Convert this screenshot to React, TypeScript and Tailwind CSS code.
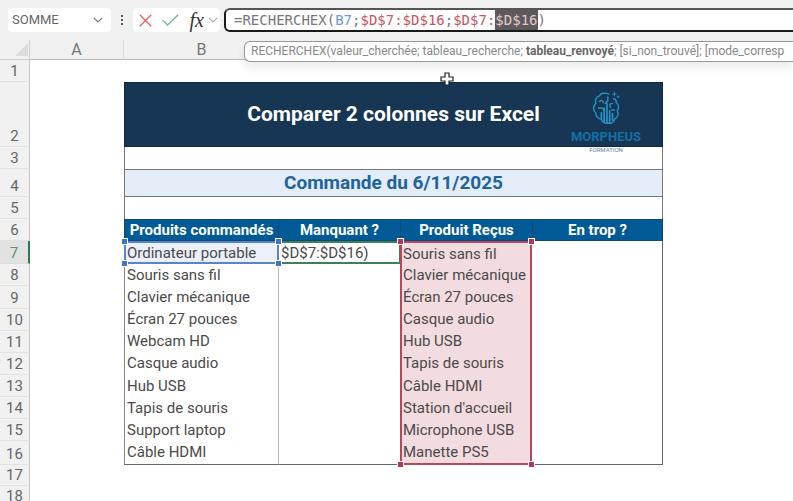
import type { ReactNode } from "react";

type Product = {
  ordered: string;
  received: string;
};

const PRODUCTS: Product[] = [
  { ordered: "Ordinateur portable", received: "Souris sans fil" },
  { ordered: "Souris sans fil", received: "Clavier mécanique" },
  { ordered: "Clavier mécanique", received: "Écran 27 pouces" },
  { ordered: "Écran 27 pouces", received: "Casque audio" },
  { ordered: "Webcam HD", received: "Hub USB" },
  { ordered: "Casque audio", received: "Tapis de souris" },
  { ordered: "Hub USB", received: "Câble HDMI" },
  { ordered: "Tapis de souris", received: "Station d'accueil" },
  { ordered: "Support laptop", received: "Microphone USB" },
  { ordered: "Câble HDMI", received: "Manette PS5" },
];

const FIRST_PRODUCT_ROW = 7;

function Chevron({ className }: { className: string }) {
  return (
    <svg viewBox="0 0 10 6" className={className} fill="none" stroke="currentColor" aria-hidden="true">
      <path d="M0.8 0.8 L5 5 L9.2 0.8" strokeWidth="1.2" />
    </svg>
  );
}

function FormulaBar() {
  return (
    <header className="flex h-10 items-start gap-1 bg-[#f0f0f0] pt-2 pl-2">
      <div className="flex h-6 w-[103px] items-center rounded-sm bg-white pr-1">
        <input
          aria-label="Zone Nom"
          defaultValue="SOMME"
          className="w-full min-w-0 bg-transparent pl-1 text-[13px] text-[#666] outline-none"
        />
        <button type="button" aria-label="Plages nommées" className="px-1 text-[#777]">
          <Chevron className="h-1.5 w-2.5" />
        </button>
      </div>
      <div className="flex h-6 w-3.5 flex-col items-center justify-center gap-0.5" aria-hidden="true">
        <span className="size-0.5 bg-[#555]" />
        <span className="size-0.5 bg-[#555]" />
        <span className="size-0.5 bg-[#555]" />
      </div>
      <div className="flex h-6 w-[87px] items-center justify-between rounded-sm bg-white pr-0.5 pl-1.5">
        <button type="button" aria-label="Annuler" className="text-[#e0635f]">
          <svg viewBox="0 0 13 13" className="size-[13px]" fill="none" stroke="currentColor">
            <path d="M0.8 0.8 L12.2 12.2 M12.2 0.8 L0.8 12.2" strokeWidth="1.3" />
          </svg>
        </button>
        <button type="button" aria-label="Entrer" className="text-[#7cb49a]">
          <svg viewBox="0 0 17 12" className="h-3 w-[17px]" fill="none" stroke="currentColor">
            <path d="M0.8 6.2 L5.6 11 L16.2 0.8" strokeWidth="1.4" />
          </svg>
        </button>
        <button
          type="button"
          aria-label="Insérer une fonction"
          className="flex items-center gap-1 font-['Liberation_Serif',serif] text-xl leading-6 text-[#333] italic"
        >
          fx
          <Chevron className="h-1.5 w-2.5 text-[#aaa]" />
        </button>
      </div>
      <div
        role="textbox"
        aria-label="Barre de formule"
        className="h-6 flex-1 overflow-hidden rounded-l-md border-2 border-r-0 border-[#1a1a1a] border-t-[#555] bg-white pl-2 font-['DejaVu_Sans_Mono',monospace] text-sm leading-5 whitespace-nowrap text-[#777]"
      >
        =RECHERCHEX(<span className="text-[#6d9bd1]">B7</span>;
        <span className="text-[#c75560]">$D$7:$D$16</span>;
        <span className="text-[#c75560]">$D$7:</span>
        <span className="inline-block bg-[#5e5a5c] text-[#e3c8cc]">$D$16</span>)
      </div>
    </header>
  );
}

function SyntaxHint() {
  return (
    <p className="absolute top-[41px] right-0 left-[244px] h-[21px] overflow-hidden rounded-l-md border border-r-0 border-[#999] bg-white pl-1.5 text-xs leading-[18px] whitespace-nowrap text-[#888] shadow-[0_6px_10px_rgba(0,0,0,0.08)]">
      RECHERCHEX(valeur_cherchée; tableau_recherche; <b className="text-[#666]">tableau_renvoyé</b>; [si_non_trouvé]; [mode_corresp
    </p>
  );
}

function Handle({ className }: { className: string }) {
  return <span className={`absolute z-10 size-[5px] outline outline-white ${className}`} aria-hidden="true" />;
}

function RowHeader({ children, active = false }: { children: ReactNode; active?: boolean }) {
  return (
    <th
      scope="row"
      className={
        active
          ? "border-r-2 border-b border-r-[#2b7a54] border-b-[#dcdcdc] bg-[#e2e2e2] p-0 text-center align-bottom text-[15px] leading-[19px] font-normal text-[#5f9078]"
          : "border-r border-b border-r-[#c4c4c4] border-b-[#e2e2e2] bg-[#f1f1f1] p-0 text-center align-bottom text-[15px] leading-[19px] font-normal text-[#666]"
      }
    >
      {children}
    </th>
  );
}

function Logo() {
  return (
    <div className="absolute top-2 right-5 flex w-[72px] flex-col items-center text-[#156fa6]">
      <svg viewBox="0 0 30 38" className="h-9 w-7" fill="none" stroke="#2196c9" strokeWidth="1.5" strokeLinecap="round" aria-hidden="true">
        <path d="M18 3 C14 1 9 2 8 5 C4 6 3 10 4 13 C1 16 1 21 4 23 C4 27 7 30 10 30 C11 33 14 35 17 34 C21 35 24 33 24 30 C28 28 29 24 27 21 C29 18 29 14 26 12 C26 10 25 8 23 8" />
        <path d="M8 11 C10 9 12 10 12 12 M17 6 V10 L14 13 M7 18 H11 L13 20 M22 13 C19 13 18 15 20 17 M24 20 H21" />
        <path d="M13 18 V33 M16 13 V34 M19 21 V34 M10 23 V29 M22 24 V31" strokeWidth="1.8" />
        <path d="M24 1 V5 M22 3 H26 M28 5 V7 M27 6 H29" strokeWidth="1" />
      </svg>
      <span className="text-[13px] leading-5 font-bold">MORPHEUS</span>
      <span className="text-[6px] leading-[6px] font-normal text-[#5d8399]">FORMATION</span>
    </div>
  );
}

function Sheet() {
  return (
    <table className="h-[467px] w-full table-fixed border-separate border-spacing-0 bg-white text-[15px] leading-[21px] text-[#4a4a4a]">
      <colgroup>
        <col className="w-[30px]" />
        <col className="w-[94px]" />
        <col className="w-[155px]" />
        <col className="w-[121px]" />
        <col className="w-[132px]" />
        <col className="w-[131px]" />
        <col />
      </colgroup>
      <thead className="bg-[#f0f0f0] text-base text-[#777]">
        <tr className="h-5">
          <td className="border-r border-b border-[#cfcfcf] p-0">
            <svg viewBox="0 0 14 14" className="ml-auto size-3.5" aria-hidden="true">
              <path d="M13 0 V13 H0 Z" fill="#dcdcdc" />
            </svg>
          </td>
          <th scope="col" className="border-r border-b border-r-[#dedede] border-b-[#bbb] p-0 leading-[19px] font-normal">A</th>
          <th scope="col" className="border-b border-[#bbb] p-0 leading-[19px] font-normal">B</th>
          <td colSpan={4} className="border-b border-[#bbb] p-0" />
        </tr>
      </thead>
      <tbody>
        <tr className="h-[22px]">
          <RowHeader>1</RowHeader>
          <td colSpan={6} />
        </tr>
        <tr className="h-[65px]">
          <RowHeader>2</RowHeader>
          <td />
          <td colSpan={4} className="relative border border-[#10283e] bg-[#173653] p-0 text-center text-[21px] font-bold text-white">
            Comparer 2 colonnes sur Excel
            <Logo />
          </td>
          <td />
        </tr>
        <tr className="h-[22px]">
          <RowHeader>3</RowHeader>
          <td />
          <td colSpan={4} className="border-x border-[#777]" />
          <td />
        </tr>
        <tr className="h-7">
          <RowHeader>4</RowHeader>
          <td />
          <td colSpan={4} className="border border-[#777] bg-[#e3edf7] p-0 text-center text-[19px] leading-6 font-bold text-[#21639c]">
            Commande du 6/11/2025
          </td>
          <td />
        </tr>
        <tr className="h-[22px]">
          <RowHeader>5</RowHeader>
          <td />
          <td colSpan={4} className="border-x border-[#777]" />
          <td />
        </tr>
        <tr className="h-[22px] text-white">
          <RowHeader>6</RowHeader>
          <td />
          <th scope="col" className="border border-[#0b4a78] bg-[#005a96] p-0 leading-5">Produits commandés</th>
          <th scope="col" className="border-y border-[#0b4a78] bg-[#005a96] p-0 leading-5">Manquant ?</th>
          <th scope="col" className="border-y border-l border-[#0b4a78] bg-[#005a96] p-0 leading-5">Produit Reçus</th>
          <th scope="col" className="border border-[#0b4a78] bg-[#005a96] p-0 leading-5">En trop ?</th>
          <td />
        </tr>
        {PRODUCTS.map((product, index) => {
          const first = index === 0;
          const last = index === PRODUCTS.length - 1;
          return (
            <tr key={product.ordered}>
              <RowHeader active={first}>{index + FIRST_PRODUCT_ROW}</RowHeader>
              <td />
              <td
                className={
                  first
                    ? "relative border-2 border-[#5b84c4] bg-[#ebf0fa] p-0 pl-px leading-[18px]"
                    : last
                      ? "border-x border-b border-l-[#888] border-r-[#bbb] border-b-[#666] p-0 pl-0.5"
                      : "border-x border-l-[#888] border-r-[#bbb] p-0 pl-0.5"
                }
              >
                {product.ordered}
                {first && (
                  <>
                    <Handle className="-top-1 -left-1 bg-[#4472c4]" />
                    <Handle className="-top-1 -right-1 bg-[#4472c4]" />
                    <Handle className="-bottom-1 -left-1 bg-[#4472c4]" />
                    <Handle className="-right-1 -bottom-1 bg-[#4472c4]" />
                  </>
                )}
              </td>
              <td
                className={
                  first
                    ? "border-y-2 border-r border-[#3f8056] p-0 pl-0.5 leading-[18px]"
                    : last
                      ? "border-b border-[#666]"
                      : ""
                }
              >
                {first && "$D$7:$D$16)"}
              </td>
              <td
                className={
                  first
                    ? "relative border-x-2 border-t-2 border-[#b5485e] bg-[#f3dcdf] p-0 pl-px leading-[18px]"
                    : last
                      ? "relative border-x-2 border-b-2 border-[#b5485e] bg-[#f3dcdf] p-0 pl-px leading-5"
                      : "border-x-2 border-[#b5485e] bg-[#f3dcdf] p-0 pl-px"
                }
              >
                {product.received}
                {first && (
                  <>
                    <Handle className="-top-1 -left-1 bg-[#b03a56]" />
                    <Handle className="-top-1 -right-1 bg-[#b03a56]" />
                  </>
                )}
                {last && (
                  <>
                    <Handle className="-bottom-1 -left-1 bg-[#b03a56]" />
                    <Handle className="-right-1 -bottom-1 bg-[#b03a56]" />
                  </>
                )}
              </td>
              <td className={last ? "border-r border-b border-[#666]" : "border-r border-[#666]"} />
              <td />
            </tr>
          );
        })}
        <tr>
          <RowHeader>17</RowHeader>
          <td colSpan={6} />
        </tr>
        <tr>
          <RowHeader>18</RowHeader>
          <td colSpan={6} />
        </tr>
      </tbody>
    </table>
  );
}

export default function App() {
  return (
    <main className="relative h-screen overflow-hidden bg-[#f0f0f0] font-[Roboto,sans-serif]">
      <FormulaBar />
      <Sheet />
      <SyntaxHint />
      <svg viewBox="0 0 14 14" className="absolute top-[72px] left-[440px] size-3.5" aria-hidden="true">
        <path d="M5 1 H9 V5 H13 V9 H9 V13 H5 V9 H1 V5 H5 Z" fill="white" stroke="#222" strokeWidth="1.2" />
      </svg>
    </main>
  );
}
